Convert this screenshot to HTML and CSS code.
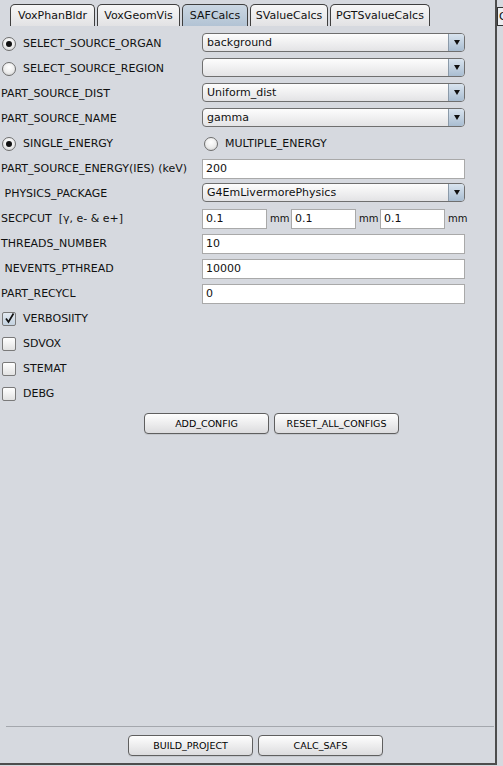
FILE: index.html
```html
<!DOCTYPE html>
<html>
<head>
<meta charset="utf-8">
<link rel="stylesheet" href="styles.css">
</head>
<body>
<div class="app">
  <div class="main">
    <div class="tabs">
      <div class="tab w1">VoxPhanBldr</div>
      <div class="tab w2">VoxGeomVis</div>
      <div class="tab w3 active">SAFCalcs</div>
      <div class="tab w4">SValueCalcs</div>
      <div class="tab w5">PGTSvalueCalcs</div>
    </div>
    <div class="content">
      <div class="form">
        <label class="opt"><span class="radio on"></span>SELECT_SOURCE_ORGAN</label>
        <div class="combo"><span class="val">background</span><span class="arrow"></span></div>

        <label class="opt"><span class="radio"></span>SELECT_SOURCE_REGION</label>
        <div class="combo"><span class="val"></span><span class="arrow"></span></div>

        <div class="lbl">PART_SOURCE_DIST</div>
        <div class="combo"><span class="val">Uniform_dist</span><span class="arrow"></span></div>

        <div class="lbl">PART_SOURCE_NAME</div>
        <div class="combo"><span class="val">gamma</span><span class="arrow"></span></div>

        <label class="opt"><span class="radio on"></span>SINGLE_ENERGY</label>
        <label class="opt"><span class="radio"></span>MULTIPLE_ENERGY</label>

        <div class="lbl">PART_SOURCE_ENERGY(IES) (keV)</div>
        <div class="field">200</div>

        <div class="lbl">&nbsp;PHYSICS_PACKAGE</div>
        <div class="combo"><span class="val">G4EmLivermorePhysics</span><span class="arrow"></span></div>

        <div class="lbl">SECPCUT&nbsp; [γ, e- &amp; e+]</div>
        <div class="cuts">
          <div class="field small">0.1</div><span class="unit">mm</span>
          <div class="field small">0.1</div><span class="unit">mm</span>
          <div class="field small">0.1</div><span class="unit last">mm</span>
        </div>

        <div class="lbl">THREADS_NUMBER</div>
        <div class="field">10</div>

        <div class="lbl">&nbsp;NEVENTS_PTHREAD</div>
        <div class="field">10000</div>

        <div class="lbl">PART_RECYCL</div>
        <div class="field">0</div>

        <label class="opt span"><span class="check on"><svg width="11" height="11" viewBox="0 0 11 11"><path d="M2 5.5 L4.5 9 L9.5 0.5" fill="none" stroke="#111" stroke-width="1.7"/></svg></span>VERBOSIITY</label>
        <label class="opt span"><span class="check"></span>SDVOX</label>
        <label class="opt span"><span class="check"></span>STEMAT</label>
        <label class="opt span"><span class="check"></span>DEBG</label>
      </div>
      <div class="actions">
        <button class="btn">ADD_CONFIG</button>
        <button class="btn">RESET_ALL_CONFIGS</button>
      </div>
    </div>
    <div class="footer">
      <button class="btn">BUILD_PROJECT</button>
      <button class="btn">CALC_SAFS</button>
    </div>
  </div>
  <div class="side">
    <div class="sidetab">C</div>
  </div>
</div>
</body>
</html>
```
FILE: styles.css
```css
* { box-sizing: border-box; }
html, body { margin: 0; padding: 0; }
body {
  background: #d6d9df;
  font-family: "DejaVu Sans", sans-serif;
  font-size: 11px;
  color: #111;
  width: 503px;
  height: 766px;
  overflow: hidden;
}
.app {
  display: flex;
  height: 766px;
}
.main {
  width: 497px;
  height: 765px;
  border-right: 2px solid #4d4d4d;
  border-bottom: 2px solid #4d4d4d;
  display: flex;
  flex-direction: column;
}
.side {
  width: 6px;
  padding-top: 7px;
}
.sidetab {
  height: 19px;
  border: 1px solid #333;
  border-right: none;
  background: #eceef1;
  font-size: 11px;
  line-height: 17px;
  padding-left: 1px;
  overflow: hidden;
}
.tabs {
  display: flex;
  gap: 2px;
  padding: 4px 0 0 10px;
  height: 26px;
}
.tab {
  height: 22px;
  border: 1px solid #3f3f3f;
  border-bottom: none;
  border-radius: 5px 5px 0 0;
  background: linear-gradient(#f7f7f7, #e2e2e4);
  text-align: center;
  line-height: 21px;
  white-space: nowrap;
}
.tab.active {
  background: linear-gradient(#cbd7e3, #b2c3d4);
}
.w1 { width: 85px; }
.w2 { width: 83px; }
.w3 { width: 66px; }
.w4 { width: 78px; }
.w5 { width: 100px; }

.content {
  padding-top: 5px;
  flex: 1;
}
.form {
  display: grid;
  grid-template-columns: 202px 263px;
  grid-auto-rows: 25px;
  align-items: center;
}
.lbl {
  padding-left: 1px;
  white-space: pre;
}
.opt {
  display: flex;
  align-items: center;
  gap: 7px;
  padding-left: 2px;
}
.span { grid-column: 1 / 3; }
.radio {
  width: 14px;
  height: 14px;
  border-radius: 50%;
  border: 1px solid #6e6e6e;
  background: radial-gradient(circle at 50% 35%, #ffffff 0%, #ececec 55%, #c8c8c8 100%);
  display: flex;
  align-items: center;
  justify-content: center;
  flex: none;
}
.radio.on::after {
  content: "";
  width: 6px;
  height: 6px;
  border-radius: 50%;
  background: #111;
}
.check {
  width: 14px;
  height: 14px;
  border-radius: 2px;
  border: 1px solid #7a7a7a;
  background: linear-gradient(#ffffff, #e2e2e2);
  display: flex;
  align-items: center;
  justify-content: center;
  flex: none;
}
.check.on {
  background: linear-gradient(#e3eaf2, #c4d2e0);
}
.combo {
  height: 19px;
  margin-bottom: 3px;
  border: 1px solid #6f6f6f;
  border-radius: 4px;
  background: linear-gradient(#fdfdfd, #e3e3e5);
  display: flex;
  overflow: hidden;
}
.combo .val {
  flex: 1;
  padding-left: 4px;
  line-height: 17px;
}
.combo .arrow {
  width: 16px;
  border-left: 1px solid #8b9aa9;
  background: linear-gradient(#d9e4ef, #a9bdd1);
  display: flex;
  align-items: center;
  justify-content: center;
}
.combo .arrow::after {
  content: "";
  border-left: 3.5px solid transparent;
  border-right: 3.5px solid transparent;
  border-top: 5px solid #111;
  margin-top: 1px;
}
.field {
  height: 20px;
  border: 1px solid #a9a9a9;
  background: #fff;
  padding-left: 3px;
  line-height: 18px;
}
.cuts {
  display: flex;
  align-items: center;
}
.field.small { width: 65px; flex: none; }
.unit {
  font-size: 10px;
  width: 24px;
  flex: none;
  padding-left: 3px;
}
.unit.last { width: auto; }
.actions {
  display: flex;
  gap: 5px;
  padding: 7px 0 0 144px;
}
.btn {
  width: 125px;
  height: 21px;
  border: 1px solid #5f5f5f;
  border-radius: 4px;
  background: linear-gradient(#fefefe, #dcdcde);
  font-family: "DejaVu Sans", sans-serif;
  font-size: 9.5px;
  font-weight: normal;
  color: #000;
  padding: 0;
  box-shadow: 0 1px 0 rgba(0,0,0,0.08);
}
.footer {
  margin: 0 1px 0 6px;
  border-top: 1px solid #a4a7ad;
  height: 37px;
  display: flex;
  gap: 5px;
  padding: 8px 0 0 122px;
}
```
